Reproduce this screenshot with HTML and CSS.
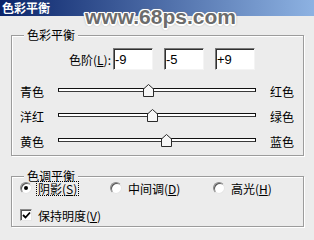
FILE: index.html
```html
<!DOCTYPE html>
<html lang="zh">
  <head>
    <meta charset="UTF-8" />
    <title>色彩平衡</title>
    <link rel="stylesheet" href="styles.css">
  </head>
  <body>
    <div class="dialog">
      <header class="titlebar">色彩平衡</header>
      <div class="watermark">www.68ps.com</div>

      <main class="content">
        <fieldset class="group group-balance">
          <legend>色彩平衡</legend>
          <div class="levels">
            <span class="levels-label">色阶(<u>L</u>):</span>
            <input class="level" type="text" value="-9" />
            <input class="level" type="text" value="-5" />
            <input class="level" type="text" value="+9" />
          </div>

          <div class="sliders">
            <div class="slider-row">
              <span class="side-label">青色</span>
              <div class="track">
                <span class="thumb" style="left: 45.5%">
                  <svg width="11" height="13" viewBox="0 0 11 13"><polygon points="5.5,0.5 10.5,5 10.5,12.5 0.5,12.5 0.5,5" /></svg>
                </span>
              </div>
              <span class="side-label right">红色</span>
            </div>
            <div class="slider-row">
              <span class="side-label">洋红</span>
              <div class="track">
                <span class="thumb" style="left: 47.5%">
                  <svg width="11" height="13" viewBox="0 0 11 13"><polygon points="5.5,0.5 10.5,5 10.5,12.5 0.5,12.5 0.5,5" /></svg>
                </span>
              </div>
              <span class="side-label right">绿色</span>
            </div>
            <div class="slider-row">
              <span class="side-label">黄色</span>
              <div class="track">
                <span class="thumb" style="left: 54.5%">
                  <svg width="11" height="13" viewBox="0 0 11 13"><polygon points="5.5,0.5 10.5,5 10.5,12.5 0.5,12.5 0.5,5" /></svg>
                </span>
              </div>
              <span class="side-label right">蓝色</span>
            </div>
          </div>
        </fieldset>

        <fieldset class="group group-tone">
          <legend>色调平衡</legend>
          <div class="tone-row">
            <label class="option opt-shadow">
              <span class="radio checked"></span>
              <span class="option-text focused">阴影(<u>S</u>)</span>
            </label>
            <label class="option opt-mid">
              <span class="radio"></span>
              <span class="option-text">中间调(<u>D</u>)</span>
            </label>
            <label class="option">
              <span class="radio"></span>
              <span class="option-text">高光(<u>H</u>)</span>
            </label>
          </div>
          <div class="tone-row check-row">
            <label class="option">
              <span class="checkbox">
                <svg width="9" height="9" viewBox="0 0 9 9"><path d="M1 4 L3.5 6.5 L8 1.5" /></svg>
              </span>
              <span class="option-text">保持明度(<u>V</u>)</span>
            </label>
          </div>
        </fieldset>
      </main>
    </div>
  </body>
</html>
```

FILE: styles.css
```css
body {
  margin: 0;
  background-color: #ececec;
  font-family: "Noto Sans CJK SC", "Noto Sans", sans-serif;
  font-size: 12px;
  color: #000;
}

.dialog {
  position: relative;
  width: 314px;
  height: 240px;
  background-color: #ececec;
  overflow: hidden;
}

.titlebar {
  height: 16px;
  line-height: 16px;
  padding-left: 2px;
  font-weight: bold;
  color: #fff;
  background: linear-gradient(to right, #0a246a, #8db2e2);
}

/* site watermark stamped over the window */
.watermark {
  position: absolute;
  left: 85px;
  top: 6px;
  font-family: "Liberation Sans", Arial, sans-serif;
  font-weight: bold;
  font-size: 21px;
  line-height: 21px;
  color: #6c6c6c;
  text-shadow:
    1.5px 0 0 #fff, -1.5px 0 0 #fff, 0 1.5px 0 #fff, 0 -1.5px 0 #fff,
    1px 1px 0 #fff, -1px -1px 0 #fff, 1px -1px 0 #fff, -1px 1px 0 #fff,
    0 0 3px #777, 0 0 3px #777;
}

.content {
  padding: 0 10px 0 11px;
}

.group {
  margin: 0;
  padding: 0 0 3px 0;
  min-width: 0;
  border: 1px solid #9c9c9c;
  box-shadow: 1px 1px 0 #fff, inset 1px 1px 0 #fff;
}

.group legend {
  margin-left: 12px;
  padding: 0 3px;
  line-height: 12px;
  background-color: #ececec;
}

.group-balance {
  margin-top: 13px;
}

.group-tone {
  margin-top: 14px;
  padding-bottom: 5px;
}

.levels {
  display: flex;
  align-items: center;
  gap: 11px;
  margin-top: 7px;
  height: 22px;
}

.levels-label {
  width: 99px;
  margin-right: -9px;
  text-align: right;
}

.level {
  box-sizing: border-box;
  width: 40px;
  height: 22px;
  margin: 0;
  padding: 0 0 0 1px;
  font-family: "Liberation Sans", Arial, sans-serif;
  font-size: 13px;
  color: #000;
  background: #fff;
  border: 1px solid;
  border-color: #7a7a7a #f4f4f4 #f4f4f4 #7a7a7a;
  box-shadow: inset 1px 1px 0 #303030;
  outline: none;
}

.sliders {
  margin-top: 7px;
}

.slider-row {
  display: flex;
  align-items: center;
  height: 25px;
  padding-left: 8px;
}

.side-label {
  width: 38px;
  padding-top: 3px;
}

.side-label.right {
  width: 24px;
  margin-left: 14px;
}

.track {
  position: relative;
  box-sizing: border-box;
  width: 198px;
  height: 4px;
  background: #fff;
  border: 1px solid #111;
  border-bottom-color: #3a3a3a;
}

.thumb {
  position: absolute;
  top: -5px;
  width: 11px;
  height: 13px;
  margin-left: -5px;
}

.thumb svg {
  display: block;
}

.thumb polygon {
  fill: #f6f6f6;
  stroke: #2a2a2a;
  stroke-width: 1;
}

.tone-row {
  display: flex;
  align-items: center;
  height: 12px;
  padding-left: 8px;
}

.check-row {
  margin-top: 15px;
}

.option {
  display: flex;
  align-items: center;
}

.opt-shadow {
  width: 90px;
}

.opt-mid {
  width: 103px;
}

.radio,
.checkbox {
  position: relative;
  box-sizing: border-box;
  width: 12px;
  height: 12px;
  background: #fff;
  border: 1px solid;
  border-color: #8a8a8a #e6e6e6 #e6e6e6 #8a8a8a;
  box-shadow: inset 1px 1px 0 #555;
}

.radio {
  border-radius: 50%;
}

.radio.checked::after {
  content: "";
  position: absolute;
  left: 3px;
  top: 3px;
  width: 4px;
  height: 4px;
  border-radius: 50%;
  background: #000;
}

.checkbox svg {
  display: block;
  margin: 1px 0 0 1px;
}

.checkbox path {
  fill: none;
  stroke: #000;
  stroke-width: 1.8;
}

.option-text {
  margin-left: 4px;
  padding: 0 1px;
  line-height: 13px;
  border: 1px solid transparent;
}

.option-text.focused {
  border: 1px dotted #000;
}
```
